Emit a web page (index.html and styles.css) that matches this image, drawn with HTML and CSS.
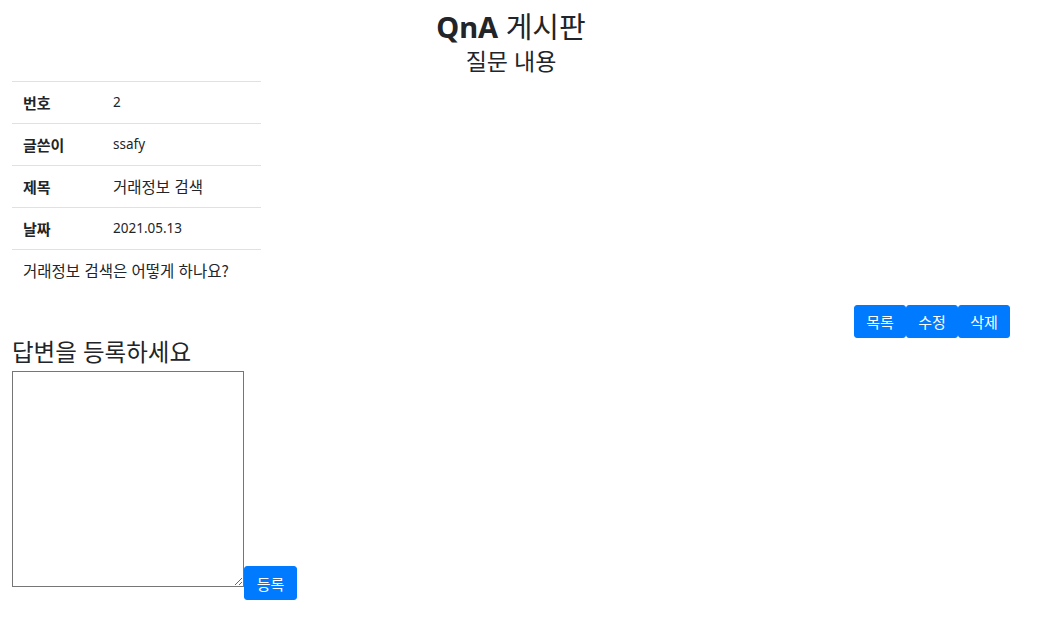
FILE: index.html
```html
<!DOCTYPE html>
<html lang="ko">
<head>
<meta charset="utf-8">
<title>QnA 게시판</title>
<link rel="stylesheet" href="styles.css">
</head>
<body>
<div class="page">
  <h2 class="title"><b>QnA</b> 게시판</h2>
  <h4 class="subtitle">질문 내용</h4>
  <table class="info">
    <tbody>
      <tr><th>번호</th><td class="latin">2</td></tr>
      <tr><th>글쓴이</th><td class="latin">ssafy</td></tr>
      <tr><th>제목</th><td>거래정보 검색</td></tr>
      <tr><th>날짜</th><td class="latin">2021.05.13</td></tr>
      <tr class="content"><td colspan="2">거래정보 검색은 어떻게 하나요?</td></tr>
    </tbody>
  </table>
  <div class="actions">
    <button class="btn">목록</button><button class="btn">수정</button><button class="btn">삭제</button>
  </div>
  <h4 class="answer-title">답변을 등록하세요</h4>
  <div class="answer">
    <textarea class="answer-box"></textarea><button class="btn btn-submit">등록</button>
  </div>
</div>
</body>
</html>
```
FILE: styles.css
```css
html, body {
  margin: 0;
  padding: 0;
  background: #fff;
}
body {
  font-family: "Noto Sans", "Noto Sans CJK KR", sans-serif;
  color: #212529;
  font-size: 14px;
}
.page {
  width: 1021px;
  box-sizing: border-box;
  padding: 0 11px 0 12px;
}
.title {
  text-align: center;
  font-size: 29px;
  font-weight: 400;
  line-height: 38px;
  margin: 8px 0 1px;
}
.title b {
  font-weight: 700;
}
.subtitle {
  text-align: center;
  font-size: 23px;
  font-weight: 400;
  line-height: 29px;
  margin: 0 0 5px;
}
.info {
  border-collapse: collapse;
  width: 249px;
  font-family: "Noto Sans CJK KR", "Noto Sans", sans-serif;
}
.info th, .info td {
  border-top: 1px solid #dee2e6;
  padding: 10px 11px;
  line-height: 21px;
  height: 21px;
  text-align: left;
  font-size: 15.5px;
  vertical-align: middle;
}
.info th {
  width: 68px;
  font-weight: 700;
  font-size: 15px;
}
.info td.latin {
  font-family: "Noto Sans", sans-serif;
  font-size: 13.5px;
}
.actions {
  display: flex;
  justify-content: flex-end;
  margin-top: 14px;
}
.btn {
  background: #007bff;
  color: #fff;
  border: 1px solid #007bff;
  border-radius: 3px;
  font-family: "Noto Sans CJK KR", sans-serif;
  font-size: 15px;
  line-height: 21px;
  padding: 5px 0;
  width: 53px;
  cursor: pointer;
}
.actions .btn {
  width: 52px;
}
.btn-submit {
  padding: 6px 0 5px;
  vertical-align: -3px;
}
.answer-title {
  font-size: 23.5px;
  font-weight: 400;
  line-height: 29px;
  margin: 0 0 4px;
}
.answer-box {
  width: 232px;
  height: 216px;
  box-sizing: border-box;
  border: 1px solid #767676;
  margin: 0;
  vertical-align: baseline;
  resize: both;
}
```
